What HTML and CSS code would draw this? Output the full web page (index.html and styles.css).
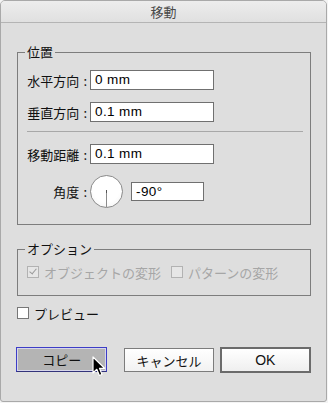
FILE: index.html
```html
<!DOCTYPE html>
<html lang="ja">
<head>
<meta charset="utf-8">
<link rel="stylesheet" href="styles.css">
</head>
<body>
<div class="window">
  <div class="titlebar">移動</div>
  <div class="content">
    <fieldset class="group group-pos">
      <legend>位置</legend>
      <div class="rows">
        <div class="row">
          <span class="label">水平方向<span class="colon">:</span></span>
          <span class="field wide">0 mm</span>
        </div>
        <div class="row">
          <span class="label">垂直方向<span class="colon">:</span></span>
          <span class="field wide">0.1 mm</span>
        </div>
        <div class="sep"></div>
        <div class="row">
          <span class="label">移動距離<span class="colon">:</span></span>
          <span class="field wide">0.1 mm</span>
        </div>
        <div class="row angle-row">
          <span class="label">角度<span class="colon">:</span></span>
          <span class="dial"><span class="needle"></span><span class="hub"></span></span>
          <span class="field short">-90°</span>
        </div>
      </div>
    </fieldset>

    <fieldset class="group group-opt">
      <legend>オプション</legend>
      <div class="opts">
        <span class="check disabled"><span class="box checked"></span>オブジェクトの変形</span>
        <span class="check disabled"><span class="box"></span>パターンの変形</span>
      </div>
    </fieldset>

    <div class="preview">
      <span class="check"><span class="box"></span>プレビュー</span>
    </div>

    <div class="buttons">
      <span class="btn btn-copy">コピー<svg class="cursor" width="14" height="21" viewBox="0 0 14 21"><path d="M1 1 L1 17 L4.8 13.3 L7.4 19.5 L10 18.4 L7.5 12.3 L12.6 12.3 Z" fill="#000" stroke="#fff" stroke-width="1.2" stroke-linejoin="round"/></svg></span>
      <span class="btn btn-cancel">キャンセル</span>
      <span class="btn btn-ok">OK</span>
    </div>
  </div>
</div>
</body>
</html>
```
FILE: styles.css
```css
html, body {
  margin: 0;
  padding: 0;
  background: #f4f4f4;
}
body {
  width: 328px;
  height: 403px;
  overflow: hidden;
  font-family: "Liberation Sans", "Noto Sans CJK JP", sans-serif;
  font-size: 13px;
  color: #111;
}
.window {
  width: 325px;
  height: 400px;
  border: 1px solid #a9a9a9;
  border-radius: 5px 5px 3px 3px;
  background: #dedede;
  overflow: hidden;
}
.titlebar {
  height: 21px;
  border-bottom: 1px solid #b4b4b4;
  background: linear-gradient(#ededed, #e0e0e0);
  text-align: center;
  line-height: 22px;
  color: #4a4a4a;
  font-family: "Noto Sans CJK JP", sans-serif;
  font-size: 13px;
}
.content {
  display: flex;
  flex-direction: column;
  padding: 0 15px 0 16px;
}
.group {
  margin: 0;
  padding: 0;
  border: 1px solid #7d7d7d;
  min-width: 0;
}
.group legend {
  margin-left: 7px;
  padding: 0 2px 0 2px;
  height: 16px;
  line-height: 16px;
  font-family: "Noto Sans CJK JP", sans-serif;
  font-size: 13px;
  color: #111;
}
.group-pos {
  margin-top: 21px;
  height: 179px;
}
.rows {
  display: flex;
  flex-direction: column;
  padding: 10px 0 0 0;
}
.row {
  display: flex;
  align-items: center;
  height: 20px;
}
.row + .row {
  margin-top: 12px;
}
.sep + .row {
  margin-top: 12px;
}
.label {
  width: 69px;
  text-align: right;
  padding-right: 3px;
  font-family: "Noto Sans CJK JP", sans-serif;
  font-size: 13px;
  white-space: nowrap;
}
.colon {
  margin-left: 4px;
}
.field {
  box-sizing: border-box;
  height: 20px;
  border: 1px solid #707070;
  background: #fff;
  padding-left: 4px;
  line-height: 18px;
  font-family: "Liberation Sans", sans-serif;
  font-size: 13.5px;
  letter-spacing: 0.4px;
  color: #000;
}
.field.wide {
  width: 124px;
}
.sep {
  height: 1px;
  background: #a8a8a8;
  margin: 9px 7px 0 9px;
}
.angle-row {
  height: 33px;
  margin-top: 11px !important;
}
.dial {
  position: relative;
  box-sizing: border-box;
  width: 33px;
  height: 33px;
  border: 1px solid #8a8a8a;
  border-radius: 50%;
  background: radial-gradient(circle at 50% 40%, #ffffff 55%, #f0f0f0 100%);
  margin-right: 8px;
}
.needle {
  position: absolute;
  left: 15px;
  top: 15px;
  width: 1px;
  height: 16px;
  background: #8c8c8c;
}
.hub {
  position: absolute;
  left: 15px;
  top: 14px;
  width: 1px;
  height: 3px;
  background: #555;
}
.field.short {
  width: 73px;
  height: 19px;
  line-height: 17px;
}
.group-opt {
  margin-top: 16px;
  height: 53px;
}
.opts {
  display: flex;
  align-items: center;
  gap: 0;
  padding: 8px 0 0 9px;
  height: 14px;
}
.check {
  display: inline-flex;
  align-items: center;
  font-family: "Noto Sans CJK JP", sans-serif;
  font-size: 13px;
  white-space: nowrap;
}
.check.disabled {
  color: #a6a6a6;
}
.check.disabled + .check.disabled {
  margin-left: 10px;
}
.box {
  position: relative;
  box-sizing: border-box;
  width: 12px;
  height: 12px;
  border: 1px solid #777;
  background: #fff;
  margin-right: 5px;
}
.disabled .box {
  border-color: #b2b2b2;
  background: #e6e6e6;
}
.box.checked::after {
  content: "";
  position: absolute;
  left: 3px;
  top: 0px;
  width: 3px;
  height: 6px;
  border-right: 1.5px solid #9a9a9a;
  border-bottom: 1.5px solid #9a9a9a;
  transform: rotate(40deg);
}
.preview {
  margin-top: 10px;
  display: flex;
  height: 14px;
  align-items: center;
}
.preview .check {
  color: #111;
}
.buttons {
  margin-top: 28px;
  display: flex;
  align-items: flex-start;
}
.btn {
  position: relative;
  box-sizing: border-box;
  display: flex;
  align-items: center;
  justify-content: center;
  height: 24px;
  font-family: "Noto Sans CJK JP", sans-serif;
  font-size: 13px;
  color: #111;
}
.btn-copy {
  width: 92px;
  height: 25px;
  margin-top: -1px;
  margin-left: -1px;
  border: 1px solid #3d3dc6;
  border-bottom-color: #33337a;
  box-shadow: inset 0 0 0 1px #d6d6ea;
  background: #b4b4b4;
}
.cursor {
  position: absolute;
  left: 75px;
  top: 8px;
}
.btn-cancel {
  width: 90px;
  margin-left: 17px;
  border: 1px solid #7c7c7c;
  background: linear-gradient(#ffffff, #f2f2f2);
}
.btn-ok {
  width: 92px;
  height: 26px;
  margin-top: -1px;
  margin-left: 6px;
  border: 2px solid #6b6b6b;
  background: linear-gradient(#ffffff, #efefef);
  font-family: "Liberation Sans", sans-serif;
  font-size: 14px;
}
```
